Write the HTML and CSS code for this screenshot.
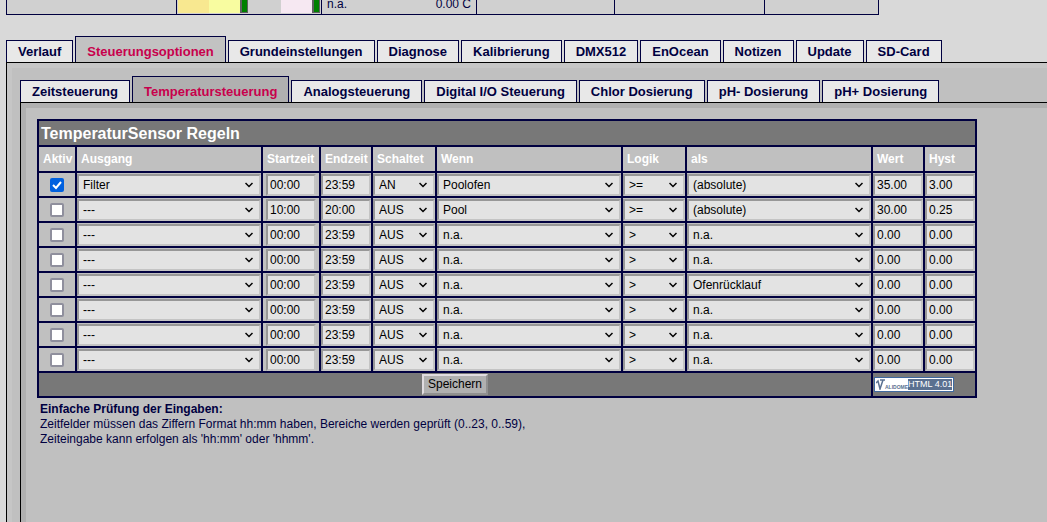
FILE: index.html
```html
<!DOCTYPE html>
<html lang="de">
<head>
  <meta charset="UTF-8">
  <meta name="viewport" content="width=device-width, initial-scale=1.0">
  <title>Temperatursteuerung</title>
  <link rel="stylesheet" href="styles.css">
</head>
<body>

  <table class="status">
    <tr>
      <td class="w170"></td>
      <td class="w145">
        <div class="gauges">
          <span class="warm"></span><span class="yellow"></span><span class="led"></span>
          <span class="space"></span>
          <span class="pink"></span><span class="led"></span>
        </div>
      </td>
      <td class="w155"><div class="reading"><span>n.a.</span><span>0.00 C</span></div></td>
      <td class="w138"></td>
      <td class="w150"></td>
      <td class="w114"></td>
    </tr>
  </table>

  <nav class="tabs">
    <a href="#">Verlauf</a>
    <a href="#" class="active">Steuerungsoptionen</a>
    <a href="#">Grundeinstellungen</a>
    <a href="#">Diagnose</a>
    <a href="#">Kalibrierung</a>
    <a href="#">DMX512</a>
    <a href="#">EnOcean</a>
    <a href="#">Notizen</a>
    <a href="#">Update</a>
    <a href="#">SD-Card</a>
  </nav>

  <main class="panel">
    <div class="inner">
      <nav class="tabs">
        <a href="#">Zeitsteuerung</a>
        <a href="#" class="active">Temperatursteuerung</a>
        <a href="#">Analogsteuerung</a>
        <a href="#">Digital I/O Steuerung</a>
        <a href="#">Chlor Dosierung</a>
        <a href="#">pH- Dosierung</a>
        <a href="#">pH+ Dosierung</a>
      </nav>

      <section class="panel subpanel">
        <form class="inner">
          <table class="rules">
            <thead>
              <tr class="title"><th colspan="10">TemperaturSensor Regeln</th></tr>
              <tr class="head">
                <th>Aktiv</th><th>Ausgang</th><th>Startzeit</th><th>Endzeit</th><th>Schaltet</th>
                <th>Wenn</th><th>Logik</th><th>als</th><th>Wert</th><th>Hyst</th>
              </tr>
            </thead>
            <tbody>
              <tr>
                <td><input type="checkbox" aria-label="Aktiv 1" checked></td>
                <td><select class="wide" aria-label="Ausgang 1"><option>Filter</option></select></td>
                <td><input type="text" aria-label="Startzeit 1" value="00:00"></td>
                <td><input type="text" aria-label="Endzeit 1" value="23:59"></td>
                <td><select class="small" aria-label="Schaltet 1"><option>AN</option></select></td>
                <td><select class="wide" aria-label="Wenn 1"><option>Poolofen</option></select></td>
                <td><select class="small" aria-label="Logik 1"><option>&gt;=</option></select></td>
                <td><select class="wide" aria-label="als 1"><option>(absolute)</option></select></td>
                <td><input type="text" aria-label="Wert 1" value="35.00"></td>
                <td><input type="text" aria-label="Hyst 1" value="3.00"></td>
              </tr>
              <tr>
                <td><input type="checkbox" aria-label="Aktiv 2"></td>
                <td><select class="wide" aria-label="Ausgang 2"><option>---</option></select></td>
                <td><input type="text" aria-label="Startzeit 2" value="10:00"></td>
                <td><input type="text" aria-label="Endzeit 2" value="20:00"></td>
                <td><select class="small" aria-label="Schaltet 2"><option>AUS</option></select></td>
                <td><select class="wide" aria-label="Wenn 2"><option>Pool</option></select></td>
                <td><select class="small" aria-label="Logik 2"><option>&gt;=</option></select></td>
                <td><select class="wide" aria-label="als 2"><option>(absolute)</option></select></td>
                <td><input type="text" aria-label="Wert 2" value="30.00"></td>
                <td><input type="text" aria-label="Hyst 2" value="0.25"></td>
              </tr>
              <tr>
                <td><input type="checkbox" aria-label="Aktiv 3"></td>
                <td><select class="wide" aria-label="Ausgang 3"><option>---</option></select></td>
                <td><input type="text" aria-label="Startzeit 3" value="00:00"></td>
                <td><input type="text" aria-label="Endzeit 3" value="23:59"></td>
                <td><select class="small" aria-label="Schaltet 3"><option>AUS</option></select></td>
                <td><select class="wide" aria-label="Wenn 3"><option>n.a.</option></select></td>
                <td><select class="small" aria-label="Logik 3"><option>&gt;</option></select></td>
                <td><select class="wide" aria-label="als 3"><option>n.a.</option></select></td>
                <td><input type="text" aria-label="Wert 3" value="0.00"></td>
                <td><input type="text" aria-label="Hyst 3" value="0.00"></td>
              </tr>
              <tr>
                <td><input type="checkbox" aria-label="Aktiv 4"></td>
                <td><select class="wide" aria-label="Ausgang 4"><option>---</option></select></td>
                <td><input type="text" aria-label="Startzeit 4" value="00:00"></td>
                <td><input type="text" aria-label="Endzeit 4" value="23:59"></td>
                <td><select class="small" aria-label="Schaltet 4"><option>AUS</option></select></td>
                <td><select class="wide" aria-label="Wenn 4"><option>n.a.</option></select></td>
                <td><select class="small" aria-label="Logik 4"><option>&gt;</option></select></td>
                <td><select class="wide" aria-label="als 4"><option>n.a.</option></select></td>
                <td><input type="text" aria-label="Wert 4" value="0.00"></td>
                <td><input type="text" aria-label="Hyst 4" value="0.00"></td>
              </tr>
              <tr>
                <td><input type="checkbox" aria-label="Aktiv 5"></td>
                <td><select class="wide" aria-label="Ausgang 5"><option>---</option></select></td>
                <td><input type="text" aria-label="Startzeit 5" value="00:00"></td>
                <td><input type="text" aria-label="Endzeit 5" value="23:59"></td>
                <td><select class="small" aria-label="Schaltet 5"><option>AUS</option></select></td>
                <td><select class="wide" aria-label="Wenn 5"><option>n.a.</option></select></td>
                <td><select class="small" aria-label="Logik 5"><option>&gt;</option></select></td>
                <td><select class="wide" aria-label="als 5"><option>Ofenrücklauf</option></select></td>
                <td><input type="text" aria-label="Wert 5" value="0.00"></td>
                <td><input type="text" aria-label="Hyst 5" value="0.00"></td>
              </tr>
              <tr>
                <td><input type="checkbox" aria-label="Aktiv 6"></td>
                <td><select class="wide" aria-label="Ausgang 6"><option>---</option></select></td>
                <td><input type="text" aria-label="Startzeit 6" value="00:00"></td>
                <td><input type="text" aria-label="Endzeit 6" value="23:59"></td>
                <td><select class="small" aria-label="Schaltet 6"><option>AUS</option></select></td>
                <td><select class="wide" aria-label="Wenn 6"><option>n.a.</option></select></td>
                <td><select class="small" aria-label="Logik 6"><option>&gt;</option></select></td>
                <td><select class="wide" aria-label="als 6"><option>n.a.</option></select></td>
                <td><input type="text" aria-label="Wert 6" value="0.00"></td>
                <td><input type="text" aria-label="Hyst 6" value="0.00"></td>
              </tr>
              <tr>
                <td><input type="checkbox" aria-label="Aktiv 7"></td>
                <td><select class="wide" aria-label="Ausgang 7"><option>---</option></select></td>
                <td><input type="text" aria-label="Startzeit 7" value="00:00"></td>
                <td><input type="text" aria-label="Endzeit 7" value="23:59"></td>
                <td><select class="small" aria-label="Schaltet 7"><option>AUS</option></select></td>
                <td><select class="wide" aria-label="Wenn 7"><option>n.a.</option></select></td>
                <td><select class="small" aria-label="Logik 7"><option>&gt;</option></select></td>
                <td><select class="wide" aria-label="als 7"><option>n.a.</option></select></td>
                <td><input type="text" aria-label="Wert 7" value="0.00"></td>
                <td><input type="text" aria-label="Hyst 7" value="0.00"></td>
              </tr>
              <tr>
                <td><input type="checkbox" aria-label="Aktiv 8"></td>
                <td><select class="wide" aria-label="Ausgang 8"><option>---</option></select></td>
                <td><input type="text" aria-label="Startzeit 8" value="00:00"></td>
                <td><input type="text" aria-label="Endzeit 8" value="23:59"></td>
                <td><select class="small" aria-label="Schaltet 8"><option>AUS</option></select></td>
                <td><select class="wide" aria-label="Wenn 8"><option>n.a.</option></select></td>
                <td><select class="small" aria-label="Logik 8"><option>&gt;</option></select></td>
                <td><select class="wide" aria-label="als 8"><option>n.a.</option></select></td>
                <td><input type="text" aria-label="Wert 8" value="0.00"></td>
                <td><input type="text" aria-label="Hyst 8" value="0.00"></td>
              </tr>
            </tbody>
            <tfoot>
              <tr class="foot">
                <td colspan="8"><button type="button">Speichern</button></td>
                <td colspan="2">
                  <a href="#" class="badge">
                    <svg width="9" height="11" viewBox="0 0 9 11" fill="none" stroke="#5a7090"><path d="M0 4L2 2L4 10L7 1M4 1h5" stroke-width="1.500"/></svg>
                    <span class="name">ALIDOME</span>
                    <span class="version">HTML 4.01</span>
                  </a>
                </td>
              </tr>
            </tfoot>
          </table>

          <p class="hint">
            <b>Einfache Prüfung der Eingaben:</b><br>
            Zeitfelder müssen das Ziffern Format hh:mm haben, Bereiche werden geprüft (0..23, 0..59),<br>
            Zeiteingabe kann erfolgen als 'hh:mm' oder 'hhmm'.
          </p>
        </form>
      </section>
    </div>
  </main>

</body>
</html>
```
FILE: styles.css
```css
* {
  box-sizing: border-box;
}

body {
  margin: 0 0 0 6px;
  min-height: 100vh;
  display: flex;
  flex-direction: column;
  overflow: hidden;
  background: #d9d9d9;
  color: #000040;
  font: 12px/15px "Liberation Sans", Arial, sans-serif;
}

/* Statuszeile */
.status {
  align-self: flex-start;
  border-spacing: 0;
  border-left: 1px solid #000040;
  background: #d0d0d0;
}

.status td {
  height: 15px;
  padding: 0;
  border-right: 1px solid #000040;
  border-bottom: 1px solid #000040;
  vertical-align: top;
}

.w170 { width: 170px; }
.w145 { width: 145px; }
.w155 { width: 155px; }
.w138 { width: 138px; }
.w150 { width: 150px; }
.w114 { width: 114px; }

.gauges {
  display: flex;
  height: 13px;
  padding: 0 1px;
}

.gauges span { width: 31px; }
.gauges .warm { background: #f8e890; }
.gauges .yellow { background: #f8fca0; }
.gauges .pink { background: #f6e8f2; }
.gauges .space { flex: 1; }

.gauges .led {
  width: 8px;
  background: #008000;
  border: solid #606060;
  border-width: 0 1px 1px 2px;
}

.reading {
  display: flex;
  justify-content: space-between;
  padding: 0 5px;
  line-height: 8px;
}

/* Reiter */
.tabs {
  display: flex;
  align-items: flex-end;
  gap: 2px;
  height: 26px;
}

body > .tabs {
  margin-top: 21px;
}

.tabs a {
  padding: 3px 11px 2px;
  border: 1px solid #000040;
  border-bottom: 0;
  background: #e8e8e8;
  color: #000040;
  font-size: 13px;
  font-weight: bold;
  line-height: 16px;
  text-decoration: none;
  white-space: nowrap;
}

.tabs .active {
  padding-top: 7px;
  background: #c2c2c2;
  color: #c8004c;
}

.panel {
  flex: 1;
  display: flex;
  border: solid #000;
  border-width: 1px 0 0 1px;
  padding: 5px 0 0 5px;
  background: #c6c6c6;
}

.inner {
  flex: 1;
  display: flex;
  flex-direction: column;
  padding: 8px 0 0 8px;
  background: #c0c0c0;
}

.inner .tabs .active,
.subpanel {
  background: #b0b0b0;
}

.subpanel .inner {
  padding: 11px 0 0 11px;
}

/* Regeltabelle */
.rules {
  align-self: flex-start;
  border-collapse: collapse;
}

.rules th,
.rules td {
  padding: 0;
  border: 2px solid #000040;
  height: 25px;
  text-align: center;
}

.rules th {
  padding: 0 2px 0 4px;
  height: 26px;
  color: #fff;
  text-align: left;
}

.rules .title th {
  padding: 0 2px;
  background: #787878;
  font-size: 16px;
}

.rules input,
.rules select {
  display: block;
  appearance: none;
  margin: 0 auto;
  height: 22px;
  border: 2px solid;
  border-color: #989898 #c4c4c4 #c4c4c4 #989898;
  border-radius: 0;
  background: #e3e3e3;
  color: #000;
  font: inherit;
}

.rules input {
  width: 50px;
  padding: 0 2px;
}

.rules select {
  padding: 1px 18px 0 4px;
  background: #e3e3e3 url('data:image/svg+xml,<svg xmlns="http://www.w3.org/2000/svg" width="8" height="6"><path d="M0.500 1L4 4.500L7.500 1" fill="none" stroke="black" stroke-width="1.500"/></svg>') no-repeat right 6px center;
}

.rules .wide { width: 184px; }
.rules .small { width: 62px; }

.rules input[type="checkbox"] {
  width: 14px;
  height: 14px;
  padding: 0;
  border: 2px solid #8f8f9d;
  border-radius: 2px;
  background: #fff;
}

.rules input[type="checkbox"]:checked {
  border-color: #0060df;
  background: #0060df url('data:image/svg+xml,<svg xmlns="http://www.w3.org/2000/svg" width="10" height="10"><path d="M1 5L4 8L9 2" fill="none" stroke="white" stroke-width="2"/></svg>') no-repeat center;
}

.head th:first-child { width: 38px; }
.head th:nth-child(3) { width: 58px; }

.foot td {
  background: #787878;
}

.foot button {
  display: block;
  margin: 0 auto;
  height: 21px;
  padding: 0 4px;
  border: 2px solid;
  border-color: #e0dce0 #909090 #909090 #e0dce0;
  background: #b0b0b0;
  color: #000;
  font: inherit;
}

.badge {
  display: flex;
  align-items: center;
  width: 80px;
  height: 15px;
  margin-left: 1px;
  padding: 0 1px;
  border: 1px solid #406aa0;
  background: #fff;
  color: #5a7090;
  text-decoration: none;
}

.badge svg {
  flex: none;
}

.badge .name {
  flex: 1;
  padding-top: 4px;
  font: bold 5px/8px "Liberation Sans", sans-serif;
}

.badge .version {
  background: #5a7090;
  color: #fff;
  font: 9px/11px "Liberation Sans", sans-serif;
  white-space: nowrap;
}

.hint {
  margin: 4px 3px;
}
```
